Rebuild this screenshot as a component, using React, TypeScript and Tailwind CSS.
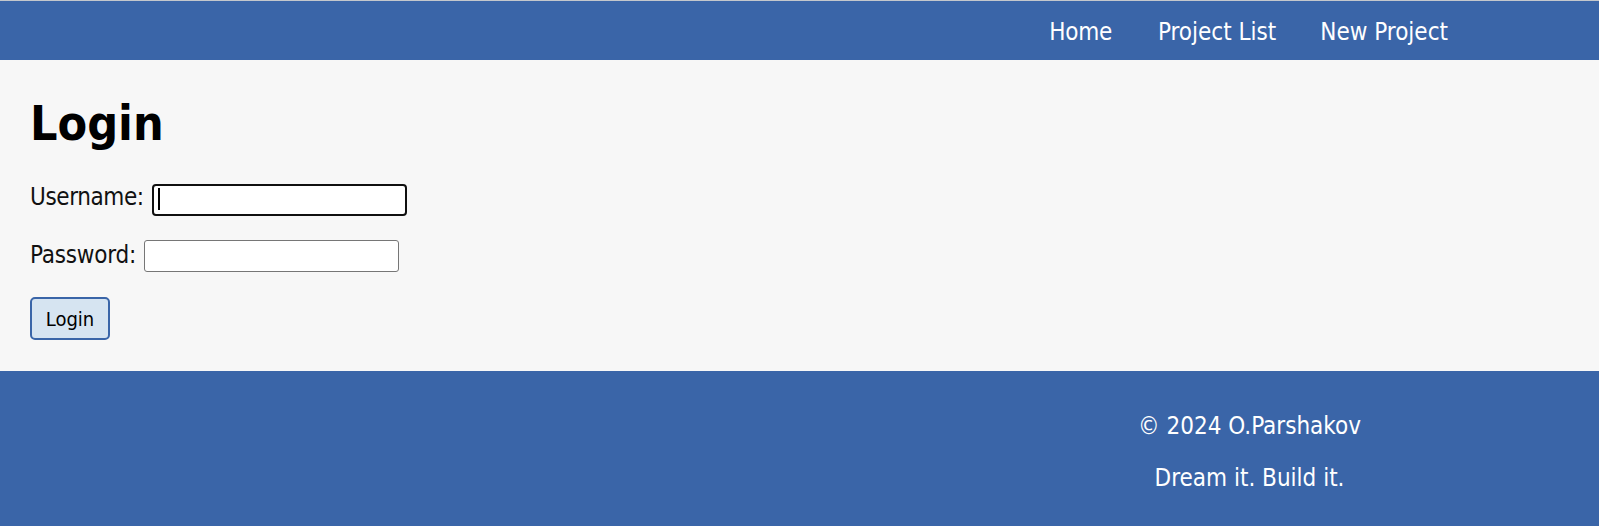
import React from "react";

export default function App() {
  return (
    <div className="w-[1599px] h-[526px] flex flex-col border-t border-[#c4c7cc] font-['DejaVu_Sans_Condensed','DejaVu_Sans',sans-serif] [font-stretch:condensed] bg-[#f7f7f7]">
      <header className="h-[59px] bg-[#3a65a8] pt-[15px]">
        <nav className="flex justify-end pr-[151px] text-[24px] leading-[32px] text-white">
          <a href="#" className="block tracking-[-0.3px]">Home</a>
          <a href="#" className="ml-[46px] block">Project List</a>
          <a href="#" className="ml-[44px] block">New Project</a>
        </nav>
      </header>

      <main className="bg-[#f7f7f7] px-[30px] pt-[35px] pb-[31px] text-black">
        <h1 className="text-[48px] leading-[56px] font-bold">Login</h1>

        <div className="mt-[30px] flex items-start gap-[8px]">
          <label className="text-[24px] leading-[32px] tracking-[-0.4px] text-[#111]">Username:</label>
          <div className="relative mt-[3px]">
            <input
              type="text"
              className="block h-[32px] w-[255px] rounded-[4px] border-2 border-[#101010] bg-white px-[4px] text-[20px] outline-none shadow-[inset_0_0_0_1px_#ffffff]"
            />
            <span className="absolute left-[6px] top-[4px] h-[22px] w-[2px] bg-black" />
          </div>
        </div>

        <div className="mt-[21px] flex items-start gap-[8px]">
          <label className="mt-[2px] text-[24px] leading-[32px] tracking-[-0.2px] text-[#111]">Password:</label>
          <input
            type="password"
            className="mt-[3px] h-[32px] w-[255px] rounded-[3px] border border-[#767676] bg-white px-[4px] text-[20px] outline-none"
          />
        </div>

        <button
          type="button"
          className="mt-[25px] block h-[43px] w-[80px] rounded-[5px] border-2 border-[#3a65a8] bg-[#d6e4f1] pt-[2px] text-center text-[20px] leading-[37px] text-black"
        >
          Login
        </button>
      </main>

      <footer className="flex-1 bg-[#3a65a8] pt-[39px] text-white">
        <div className="flex justify-end">
          <div className="w-[699px] text-center text-[24px] leading-[32px]">
            <p>© 2024 O.Parshakov</p>
            <p className="mt-[20px]">Dream it. Build it.</p>
          </div>
        </div>
      </footer>
    </div>
  );
}
